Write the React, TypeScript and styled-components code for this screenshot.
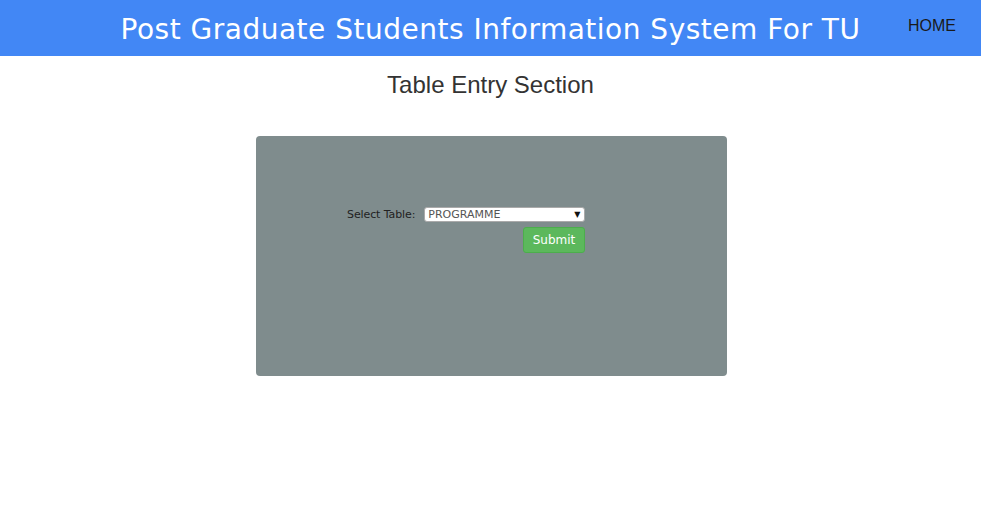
import React from "react";
import styled, { createGlobalStyle } from "styled-components";

const Global = createGlobalStyle`
  html, body { margin: 0; padding: 0; background: #fff; }
  body { font-family: "Liberation Sans", Arial, sans-serif; }
`;

const Header = styled.header`
  position: relative;
  height: 56px;
  box-sizing: border-box;
  padding-top: 4px;
  background: #4287f5;
  display: flex;
  align-items: center;
  justify-content: center;
`;

const Title = styled.h1`
  margin: 0;
  font-family: "DejaVu Sans", sans-serif;
  font-weight: 400;
  font-size: 28px;
  letter-spacing: 0.5px;
  color: #ffffff;
  line-height: 40px;
`;

const HomeLink = styled.a`
  position: absolute;
  right: 25px;
  top: 17px;
  font-family: "Liberation Sans", Arial, sans-serif;
  font-size: 16px;
  color: #1a1a1a;
  text-decoration: none;
`;

const SectionTitle = styled.h2`
  margin: 15px 0 0;
  text-align: center;
  font-family: "Liberation Sans", Arial, sans-serif;
  font-weight: 400;
  font-size: 24px;
  color: #333;
  line-height: 28px;
`;

const Panel = styled.div`
  width: 471px;
  height: 240px;
  margin: 37px 0 0 256px;
  background: #7f8c8d;
  border-radius: 4px;
  box-sizing: border-box;
  padding: 71px 0 0 91px;
`;

const Row = styled.div`
  display: flex;
  align-items: center;
  gap: 9px;
`;

const Label = styled.label`
  font-family: "DejaVu Sans", sans-serif;
  font-size: 11px;
  letter-spacing: -0.1px;
  color: #222;
`;

const SelectBox = styled.div`
  position: relative;
  width: 161px;
  height: 15px;
  background: #fff;
  border-radius: 3px;
  box-sizing: border-box;
  border: 1px solid #aaa;
  font-family: "DejaVu Sans", sans-serif;
  font-size: 11px;
  color: #555;
  line-height: 13px;
  padding-left: 3px;
`;

const Arrow = styled.span`
  position: absolute;
  right: 4px;
  top: 0;
  font-size: 8px;
  color: #111;
`;

const ButtonRow = styled.div`
  display: flex;
  justify-content: flex-end;
  width: 238px;
  margin-top: 5px;
`;

const Submit = styled.button`
  width: 62px;
  height: 26px;
  background: #5cb85c;
  color: #fff;
  border: 1px solid #4cae4c;
  border-radius: 3px;
  font-family: "DejaVu Sans", sans-serif;
  font-size: 12px;
  padding: 0;
`;

export default function App() {
  return (
    <>
      <Global />
      <Header>
        <Title>Post Graduate Students Information System For TU</Title>
        <HomeLink href="#">HOME</HomeLink>
      </Header>
      <SectionTitle>Table Entry Section</SectionTitle>
      <Panel>
        <Row>
          <Label>Select Table:</Label>
          <SelectBox>
            PROGRAMME
            <Arrow>▼</Arrow>
          </SelectBox>
        </Row>
        <ButtonRow>
          <Submit>Submit</Submit>
        </ButtonRow>
      </Panel>
    </>
  );
}
